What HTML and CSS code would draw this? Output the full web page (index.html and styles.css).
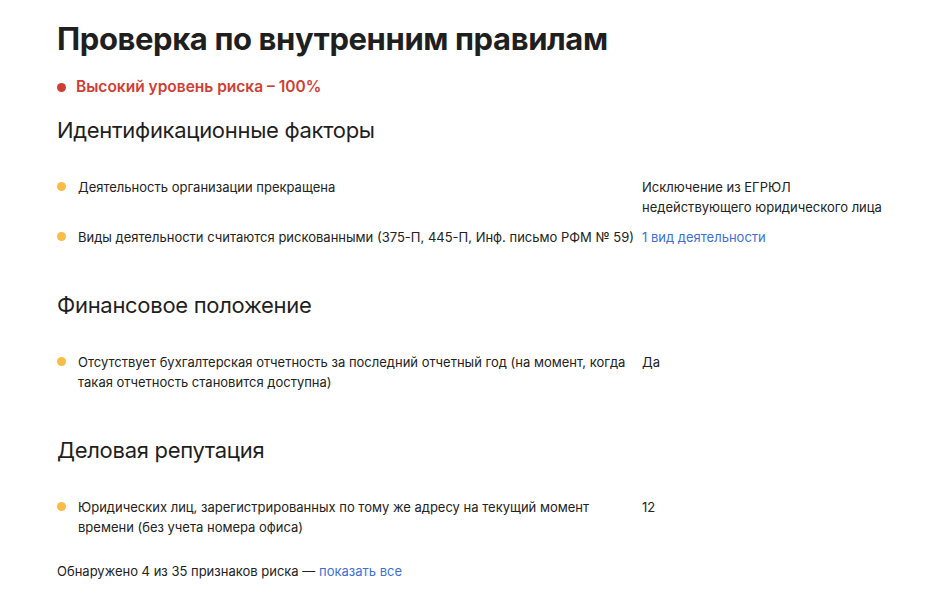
FILE: index.html
```html
<!DOCTYPE html>
<html lang="ru">
<head>
<meta charset="utf-8">
<title>Проверка по внутренним правилам</title>
<link rel="stylesheet" href="styles.css">
</head>
<body>
<main class="page">
  <h1 class="title">Проверка по внутренним правилам</h1>
  <div class="risk"><span class="risk-dot"></span>Высокий уровень риска – 100%</div>

  <section class="section first">
    <h2 class="section-title">Идентификационные факторы</h2>
    <div class="rows">
      <div class="row">
        <span class="dot"></span>
        <div class="label">Деятельность организации прекращена</div>
        <div class="value">Исключение из ЕГРЮЛ недействующего юридического лица</div>
      </div>
      <div class="row">
        <span class="dot"></span>
        <div class="label">Виды деятельности считаются рискованными (375-П, 445-П, Инф. письмо РФМ № 59)</div>
        <div class="value"><a class="link" href="#">1 вид деятельности</a></div>
      </div>
    </div>
  </section>

  <section class="section">
    <h2 class="section-title">Финансовое положение</h2>
    <div class="rows">
      <div class="row">
        <span class="dot"></span>
        <div class="label">Отсутствует бухгалтерская отчетность за последний отчетный год (на момент, когда такая отчетность становится доступна)</div>
        <div class="value">Да</div>
      </div>
    </div>
  </section>

  <section class="section">
    <h2 class="section-title">Деловая репутация</h2>
    <div class="rows">
      <div class="row">
        <span class="dot"></span>
        <div class="label">Юридических лиц, зарегистрированных по тому же адресу на текущий момент времени (без учета номера офиса)</div>
        <div class="value">12</div>
      </div>
    </div>
  </section>

  <p class="summary">Обнаружено 4 из 35 признаков риска — <a class="link" href="#">показать все</a></p>
</main>
</body>
</html>
```

FILE: styles.css
```css
* { box-sizing: border-box; }
html, body { margin: 0; padding: 0; background: #fff; }
body {
  font-family: Inter, "Noto Sans", "Liberation Sans", sans-serif;
  color: #222;
}
.page {
  padding: 19px 40px 0 57px;
}
.title {
  margin: 0;
  font-size: 31px;
  line-height: 40px;
  font-weight: 700;
  letter-spacing: -0.4px;
  color: #1f1f1f;
}
.risk {
  display: flex;
  align-items: center;
  margin-top: 18px;
  font-size: 15.5px;
  line-height: 20px;
  font-weight: 600;
  color: #d03e33;
}
.risk-dot {
  width: 9px;
  height: 9px;
  border-radius: 50%;
  background: #d03e33;
  margin-right: 10px;
}
.section { margin-top: 44px; }
.section.first { margin-top: 19px; }
.section-title {
  margin: 0 0 33px;
  font-size: 22px;
  line-height: 28px;
  font-weight: 400;
  letter-spacing: -0.3px;
  color: #1f1f1f;
}
.rows {
  display: flex;
  flex-direction: column;
  gap: 10px;
}
.row {
  display: grid;
  grid-template-columns: 21px 564px 250px;
  font-size: 13px;
  line-height: 20px;
  color: #222;
}
.dot {
  width: 9px;
  height: 9px;
  border-radius: 50%;
  background: #fbbc45;
  margin-top: 5px;
}
.label, .value { margin: 0; }
.link { color: #3d6fd6; text-decoration: none; }
.summary {
  margin: 24px 0 0;
  font-size: 13px;
  line-height: 20px;
  color: #222;
}
```
